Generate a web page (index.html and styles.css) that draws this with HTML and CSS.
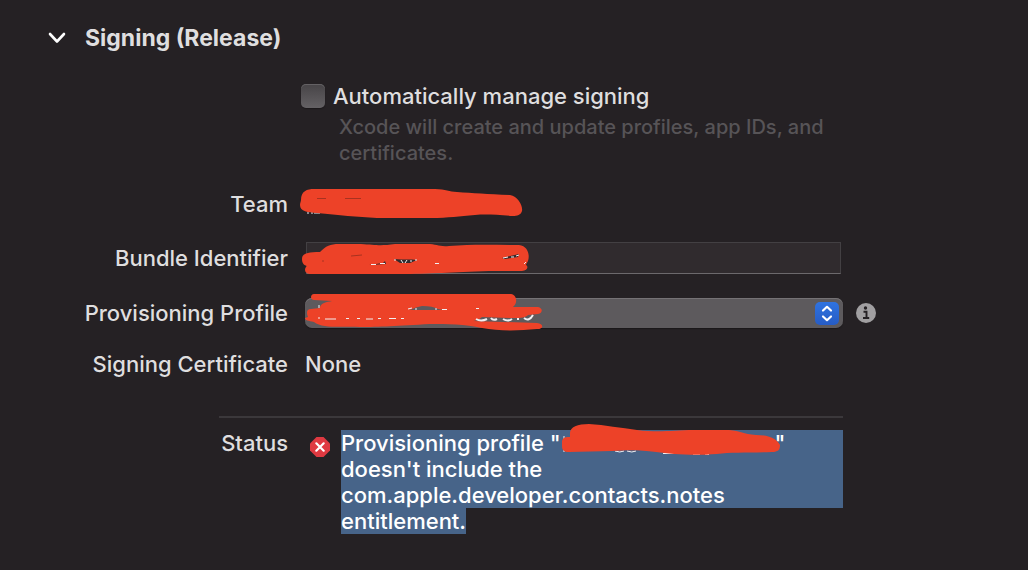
FILE: index.html
```
<!DOCTYPE html>
<html lang="en">
<head>
    <meta charset="UTF-8">
    <meta name="viewport" content="width=device-width, initial-scale=1.0">
    <title>Signing (Release)</title>
    <link rel="stylesheet" href="styles.css">
</head>
<body>

<main class="signing">

    <h2 class="heading">
        <button class="toggle" type="button" aria-expanded="true" aria-label="Signing (Release)">
            <svg width="18" height="12" viewBox="0 0 18 12"><path d="M2 2 L9 9.5 L16 2" fill="none" stroke="#fff" stroke-width="2.6" stroke-linecap="round" stroke-linejoin="round"/></svg>
        </button>
        Signing (Release)
    </h2>

    <div class="auto">
        <div class="auto-row">
            <input class="checkbox" type="checkbox" id="auto-signing">
            <label for="auto-signing">Automatically manage signing</label>
        </div>
        <p class="hint">Xcode will create and update profiles, app IDs, and certificates.</p>
    </div>

    <div class="row team">
        <span class="label">Team</span>
        <div class="value">
            <svg class="scribble scribble-team" width="226" height="32" viewBox="0 0 226 32">
                <path class="letters" d="M8 26h2M12 26h2M15 26h6"/>
                <path class="ink" d="M2 13 C2 4 8 2 15 2 L136 2 C147 2 150 5 158 5 C174 6 188 7 211 8 C219 9 224 19 223 24 C222 28 218 29 214 29 C198 28 188 27 176 28 C160 29 150 31 132 31 L78 31 C58 30 40 28 18 26 C9 25 1 25 1 18 C1 16 2 14 2 13 Z"/>
                <path class="shade" d="M18 11.500h9M46 11.500h16"/>
            </svg>
        </div>
    </div>

    <div class="row bundle">
        <label class="label" for="bundle-id">Bundle Identifier</label>
        <div class="value">
            <input class="field" type="text" id="bundle-id">
            <svg class="scribble scribble-bundle" width="230" height="34" viewBox="0 0 230 34">
                <path class="ink" d="M1 18 C1 13 5 11 19 11 C25 5 29 3 38 3 L60 3 C75 4 80 5 94 3 L126 3 C136 3 138 6 148 5 C172 3 194 4 218 4 C227 5 229 14 227 20 C226 22 225 23 225 24 C228 26 226 30 221 30 L188 30 C150 31 130 33 98 33 L9 33 C3 33 3 27 6 25 C2 24 1 21 1 18 Z"/>
                <path class="gap" d="M93 18 C103 19 110 18 116 19 L109 22 L99 22 Z M82 22 L84 20 L85 23 L68 24 Z M201 17 L218 13 L217 16 L204 18 Z"/>
                <path class="letters" d="M93 19h2M100 19l2 3M106 19l-2 3M109 20h2M114 19h2M70 23.500h5M79 22.500h5M202 17l5 -1M210 16h3M215 15l3 -1M223 23l2 -2M134 22.500h4"/>
                <path class="shade" d="M50 15l11 -1M21 20h2"/>
            </svg>
        </div>
    </div>

    <div class="row profile">
        <label class="label" for="profile">Provisioning Profile</label>
        <div class="value">
            <select class="popup" id="profile"><option></option></select>
            <svg class="arrows" width="24" height="23" viewBox="0 0 24 23">
                <defs><linearGradient id="blue" x1="0" y1="0" x2="0" y2="1"><stop offset="0" stop-color="#2f73e0"/><stop offset="1" stop-color="#265cc5"/></linearGradient></defs>
                <rect width="24" height="23" rx="5" fill="url(#blue)"/>
                <path d="M8 8.500 L12 4.800 L16 8.500 M8 14.500 L12 18.200 L16 14.500" fill="none" stroke="#fff" stroke-width="2.200" stroke-linecap="round" stroke-linejoin="round"/>
            </svg>
            <svg class="scribble scribble-profile" width="240" height="38" viewBox="0 0 240 38">
                <path class="ink" d="M10 1 L207 1 C213 2 214 10 209 14 L234 14 C239 15 239 20 234 21 L224 22 C220 26 211 25 205 25 L178 24 C174 27 171 28 169 28 L233 30 C240 31 240 36 233 36 C213 38 194 38 178 35 C161 31 143 31 126 31 C94 33 75 34 56 34 C38 33 19 36 10 29 C4 28 1 27 1 25 L4 24 C2 19 3 16 7 16 L16 15 C16 10 23 9 28 8 L10 7 C6 7 6 1 10 1 Z"/>
                <path class="popup-gap" d="M106 17 Q112 14 118 13 Q129 13 134 16 L139 17 Z"/>
                <path class="letters" d="M15 12v3M15 24v2M104 16l4 -1M112 15v2M132 15v2M138 16.500h5M21 26h11M42 25.500h3M53 25.500h3M62 26h7M74 25.500h3M85 25.500h7M97 25.500h3M172 15.500h3"/>
                <path class="letters thick" d="M172 26q5 3 11 0M187 25q2 3 6 1M199 26q5 3 9 0M214 25v2M220 25q5 4 9 -3"/>
            </svg>
        </div>
        <button class="info" type="button" aria-label="Info">
            <svg width="20" height="20" viewBox="0 0 20 20">
                <circle cx="10" cy="10" r="10" fill="#a19fa1"/>
                <circle cx="9.500" cy="5" r="1.700" fill="#252124"/>
                <path d="M7.500 8.700h3v6M7 15h6.200" fill="none" stroke="#252124" stroke-width="1.900"/>
            </svg>
        </button>
    </div>

    <div class="row certificate">
        <span class="label">Signing Certificate</span>
        <span class="value">None</span>
    </div>

    <hr class="divider">

    <div class="row status">
        <span class="label">Status</span>
        <div class="value error">
            <svg class="error-icon" width="20" height="20" viewBox="0 0 20 20">
                <path d="M6.500 0h7L20 6.500v7L13.500 20h-7L0 13.500v-7Z" fill="#df3941" stroke-linejoin="round"/>
                <path d="M6.300 6.300l7.400 7.400M13.700 6.300l-7.400 7.400" stroke="#fff" stroke-width="2.200" stroke-linecap="round"/>
            </svg>
            <div class="message">
                <div class="selected first-line">
                    <span>Provisioning profile "</span>
                    <span class="redacted"><svg class="scribble scribble-status" width="220" height="34" viewBox="0 0 220 34">
                        <path class="letters" d="M3 13v3M3 27v2M9 13h2M54 28q5 2 9 0M66 28q5 2 9 0M102 30.500h12M132 31.500h7M144 31.500h4"/>
                        <path class="ink" d="M9 12 C8 4 16 1 28 1 C44 2 60 5 76 7 C100 10 112 7 133 7 L168 7 C180 8 182 11 195 12 C211 12 216 17 219 22 C219 27 217 29 211 29 C188 30 170 29 156 31 C130 33 111 31 95 29 C79 27 68 27 51 28 L8 29 C3 29 1 27 1 23 L1 18 C2 14 5 14 9 14 Z"/>
                    </svg></span>
                    <span>"</span>
                </div>
                <div class="selected">doesn't include the com.apple.developer.contacts.notes</div>
                <span class="selected">entitlement.</span>
            </div>
        </div>
    </div>

</main>

</body>
</html>
```
FILE: styles.css
```
* {
    box-sizing: border-box;
}

body {
    margin: 0;
    background-color: #252124;
    color: #dfdedf;
    font-family: Inter, "Liberation Sans", sans-serif;
    font-size: 22px;
    line-height: 26px;
}

button {
    padding: 0;
    border: 0;
    background: none;
}

svg {
    display: block;
}

.signing {
    padding-top: 25px;
}

.heading {
    display: flex;
    align-items: center;
    gap: 19px;
    margin: 0 0 32px;
    padding-left: 48px;
    font-size: 23px;
    font-weight: 700;
}

.auto {
    padding-left: 301px;
    padding-right: 185px;
}

.auto-row {
    display: flex;
    align-items: center;
    gap: 8px;
}

.auto-row label {
    font-weight: 500;
}

.checkbox {
    appearance: none;
    width: 24px;
    height: 24px;
    margin: 0;
    border-radius: 5px;
    background: linear-gradient(#474447, #646164);
    box-shadow: inset 0 1px 0 #646164, 0 1px 1px #1b181a;
}

.hint {
    margin: 5px 0 0;
    padding-left: 38px;
    color: #575457;
    font-size: 20px;
    font-weight: 500;
}

.row {
    display: grid;
    grid-template-columns: 288px minmax(0, 1fr) 172px;
    column-gap: 17px;
    align-items: center;
}

.label {
    font-weight: 500;
    text-align: right;
}

.value {
    position: relative;
    margin-right: -4px;
    font-weight: 500;
}

.team {
    margin-top: 25px;
}

.team .value {
    height: 26px;
}

.bundle {
    margin-top: 25px;
}

.field {
    display: block;
    width: calc(100% - 3px);
    height: 32px;
    margin-left: 1px;
    padding: 0 8px;
    border: 1px solid #434043;
    border-bottom: 1px solid #6c696c;
    border-radius: 0;
    background-color: #302b2e;
    color: inherit;
    font: inherit;
}

.profile {
    margin-top: 24px;
}

.popup {
    appearance: none;
    display: block;
    width: 100%;
    height: 30px;
    padding: 0 34px 0 10px;
    border: 0;
    border-radius: 7px;
    background-color: #5d5a5d;
    box-shadow: inset 0 1px 0 #757275, 0 1px 1px #1b181a;
    color: inherit;
    font: inherit;
}

.arrows {
    position: absolute;
    top: 4px;
    right: 4px;
    pointer-events: none;
}

.certificate {
    margin-top: 23px;
}

.divider {
    height: 2px;
    margin: 39px 185px 12px 219px;
    border: 0;
    background-color: #3b383b;
}

.status {
    align-items: start;
}

.error {
    display: flex;
    gap: 11px;
    padding-left: 5px;
}

.error-icon {
    flex: none;
    margin-top: 7px;
}

.message {
    flex: 1;
    min-width: 0;
    color: #fff;
}

.selected {
    background-color: #476489;
}

.first-line {
    display: flex;
}

span.selected {
    display: inline-block;
}

/* hand-drawn marks covering private values */
.redacted {
    position: relative;
    width: 214px;
}

.scribble {
    position: absolute;
    pointer-events: none;
}

.scribble-team {
    top: -4px;
    left: -6px;
}

.scribble-bundle {
    top: -1px;
    left: -4px;
}

.scribble-profile {
    top: -5px;
    left: -1px;
}

.scribble-status {
    top: -7px;
    left: 0;
}

.ink {
    fill: #ed4228;
}

.gap {
    fill: #302b2e;
}

.popup-gap {
    fill: #5d5a5d;
}

.letters {
    fill: none;
    stroke: #f2f0f2;
    stroke-width: 1;
}

.thick {
    stroke-width: 2;
}

.shade {
    fill: none;
    stroke: #a83220;
    stroke-width: 1;
}
```
